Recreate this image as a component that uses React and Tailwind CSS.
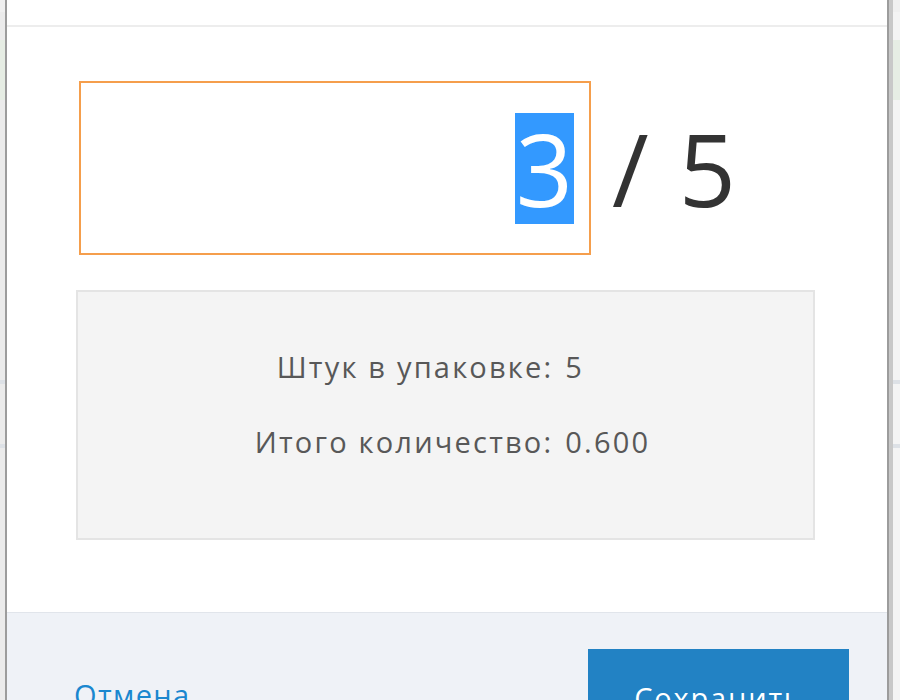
import { useState } from "react";

const font = { fontFamily: '"Open Sans", "Noto Sans", sans-serif' };

function SideStrip({ side }) {
  // faint rows of the page behind the dialog
  return (
    <div
      className={
        side === "left"
          ? "w-[5px] flex flex-col bg-[#ebebeb]"
          : "flex-1 flex flex-col bg-[#f4f4f4] border-l-[4px] border-[#c8c8c8]"
      }
    >
      <div className="h-[12px] bg-[#f0f0f0]" />
      <div className="h-[28px]" />
      <div className="h-[60px] bg-[#e6ede4]" />
      <div className="h-[280px]" />
      <div className="h-[4px] bg-[#dde1e6]" />
      <div className="h-[60px]" />
      <div className="h-[4px] bg-[#dde1e6]" />
      <div className="flex-1" />
    </div>
  );
}

export default function App() {
  const [qty] = useState("3");
  const perPack = 5;

  return (
    <div className="w-[900px] h-[700px] overflow-hidden flex" style={font}>
      <SideStrip side="left" />

      <div className="w-[884px] shrink-0 flex flex-col bg-white border-x-2 border-[#9c9c9c]">
        <div className="h-[27px] shrink-0 border-b-2 border-[#ededed]" />

        <div className="h-[585px] shrink-0 pt-[54px]">
          <div className="flex items-center ml-[72px]">
            <div className="w-[512px] h-[174px] border-2 border-[#f59e4c] flex items-center justify-end pr-[15px]">
              <span className="bg-[#3399ff] text-white text-[100px] leading-[111px] px-[1px]">
                {qty}
              </span>
            </div>
            <span className="ml-[21px] text-[100px] leading-[111px] tracking-[2px] text-[#333333]">
              / {perPack}
            </span>
          </div>

          <div className="ml-[69px] mt-[35px] w-[739px] h-[250px] bg-[#f4f4f4] border-2 border-[#e4e4e4] pt-[37px] pl-[14px]">
            <div className="grid grid-cols-[auto_auto] justify-center gap-x-[12px] text-[29px] leading-[75px] tracking-[2.2px] text-[#585858]">
              <div className="text-right">Штук в упаковке:</div>
              <div>{perPack}</div>
              <div className="text-right">Итого количество:</div>
              <div>0.600</div>
            </div>
          </div>
        </div>

        <div className="flex-1 bg-[#eff2f7] border-t border-[#e1e5eb] flex justify-between items-start pl-[67px] pr-[38px] pt-[36px]">
          <a className="mt-[27px] text-[29px] leading-[38px] tracking-[1.4px] text-[#1a87cf]">Отмена</a>
          <button className="w-[261px] h-[80px] bg-[#2282c4] text-white text-[29px] leading-[38px] tracking-[1.8px] flex items-start justify-center pt-[30px]">
            Сохранить
          </button>
        </div>
      </div>

      <SideStrip side="right" />
    </div>
  );
}
